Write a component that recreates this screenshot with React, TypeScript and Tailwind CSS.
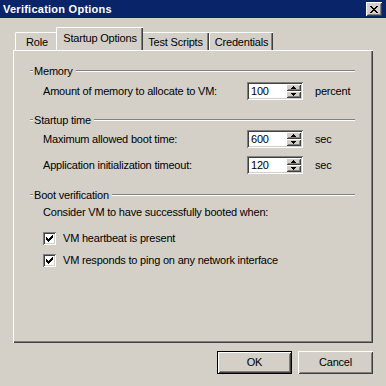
import React from "react";

const raised =
  "shadow-[inset_1px_1px_0_#ffffff,inset_-1px_-1px_0_#404040,inset_2px_2px_0_#d4d0c8,inset_-2px_-2px_0_#808080]";
const sunken =
  "shadow-[inset_1px_1px_0_#808080,inset_-1px_-1px_0_#ffffff,inset_2px_2px_0_#404040,inset_-2px_-2px_0_#d4d0c8]";

function GroupHeader({ label }: { label: string }) {
  return (
    <div className="flex h-[14px] items-center">
      <div className="flex w-[3px] flex-col">
        <div className="h-px bg-[#808080]" />
        <div className="h-px bg-white" />
      </div>
      <span className="px-[1px] leading-none">{label}</span>
      <div className="ml-[2px] flex flex-1 flex-col">
        <div className="h-px bg-[#808080]" />
        <div className="h-px bg-white" />
      </div>
    </div>
  );
}

function Arrow({ up }: { up: boolean }) {
  return (
    <svg width="5" height="3" viewBox="0 0 5 3" className="block">
      {up ? (
        <path d="M2 0h1v1h1v1h1v1H0V2h1V1h1z" fill="#000" />
      ) : (
        <path d="M0 0h5v1H4v1H3v1H2V2H1V1H0z" fill="#000" />
      )}
    </svg>
  );
}

function Spinner({ value }: { value: string }) {
  return (
    <div className={`flex h-[18px] w-[56px] items-stretch bg-white p-[2px] ${sunken}`}>
      <div className="flex flex-1 items-center pl-[2px] leading-none">{value}</div>
      <div className="flex w-[15px] flex-col">
        <div className={`flex flex-1 items-center justify-center bg-[#d4d0c8] ${raised}`}>
          <Arrow up />
        </div>
        <div className={`flex flex-1 items-center justify-center bg-[#d4d0c8] ${raised}`}>
          <Arrow up={false} />
        </div>
      </div>
    </div>
  );
}

function Row({ label, value, unit }: { label: string; value: string; unit: string }) {
  return (
    <div className="flex h-[18px] items-center pl-[13px]">
      <span className="w-[204px] leading-none">{label}</span>
      <Spinner value={value} />
      <span className="ml-[12px] leading-none">{unit}</span>
    </div>
  );
}

function Check({ label }: { label: string }) {
  return (
    <div className="flex h-[14px] items-center pl-[13px]">
      <div className={`flex h-[13px] w-[13px] items-center justify-center bg-white ${sunken}`}>
        <svg width="7" height="7" viewBox="0 0 7 7" className="block">
          <path
            d="M0 2h1v1h1v1h1V3h1V2h1V1h1V0h1v3H6v1H5v1H4v1H3v1H2V6H1V5H0z"
            fill="#000"
          />
        </svg>
      </div>
      <span className="ml-[7px] leading-none">{label}</span>
    </div>
  );
}

function Tab({ label, selected, w }: { label: string; selected?: boolean; w: string }) {
  if (selected) {
    return (
      <div
        className={`relative z-10 mx-[-2px] flex h-[23px] items-start justify-center bg-[#d4d0c8] pt-[5px] ${w} border-l border-t border-white shadow-[inset_-1px_0_0_#404040,inset_-2px_0_0_#808080] rounded-tl-[2px]`}
      >
        <span className="leading-none">{label}</span>
      </div>
    );
  }
  return (
    <div
      className={`flex h-[18px] items-start justify-center pt-[4px] ${w} border-l border-t border-white shadow-[inset_-1px_0_0_#404040,inset_-2px_0_0_#808080] rounded-tl-[2px]`}
    >
      <span className="leading-none">{label}</span>
    </div>
  );
}

export default function App() {
  return (
    <div
      className="flex h-[386px] w-[386px] flex-col bg-[#d4d0c8] text-[11px] tracking-[-0.2px] text-black"
      style={{ fontFamily: '"Liberation Sans", Arial, sans-serif' }}
    >
      <div className="flex h-[18px] items-center justify-between bg-[#0a246a] pl-[3px] pr-[4px]">
        <span className="font-bold leading-none tracking-[0.25px] text-white">Verification Options</span>
        <div className={`flex h-[14px] w-[16px] items-center justify-center bg-[#d4d0c8] ${raised}`}>
          <svg width="8" height="7" viewBox="0 0 8 7" className="block">
            <path
              d="M0 0h2v1h1v1h2V1h1V0h2v1H7v1H6v1H5v1h1v1h1v1h1v1H6V6H5V5H3v1H2v1H0V6h1V5h1V4h1V3H2V2H1V1H0z"
              fill="#000"
            />
          </svg>
        </div>
      </div>

      <div className="flex flex-1 flex-col px-[13px] pt-[9px]">
        <div className="flex h-[23px] items-end pl-[2px]">
          <Tab label="Role" w="w-[43px]" />
          <Tab label="Startup Options" selected w="w-[87px]" />
          <Tab label="Test Scripts" w="w-[68px]" />
          <Tab label="Credentials" w="w-[64px]" />
        </div>

        <div className="flex h-[293px] flex-col border-l border-t border-white pl-[16px] pr-[18px] pt-[13px] shadow-[inset_-1px_-1px_0_#404040,inset_-2px_-2px_0_#808080]">
          <GroupHeader label="Memory" />
          <div className="mt-[4px]">
            <Row label="Amount of memory to allocate to VM:" value="100" unit="percent" />
          </div>
          <div className="mt-[13px]">
            <GroupHeader label="Startup time" />
          </div>
          <div className="mt-[3px]">
            <Row label="Maximum allowed boot time:" value="600" unit="sec" />
          </div>
          <div className="mt-[8px]">
            <Row label="Application initialization timeout:" value="120" unit="sec" />
          </div>
          <div className="mt-[14px]">
            <GroupHeader label="Boot verification" />
          </div>
          <div className="mt-[3px] flex h-[14px] items-center pl-[13px] leading-none">
            Consider VM to have successfully booted when:
          </div>
          <div className="mt-[12px]">
            <Check label="VM heartbeat is present" />
          </div>
          <div className="mt-[8px]">
            <Check label="VM responds to ping on any network interface" />
          </div>
        </div>

        <div className="mt-[8px] flex justify-end gap-[6px]">
          <div className="h-[23px] w-[75px] border border-black">
            <div className={`flex h-full w-full items-center justify-center leading-none ${raised}`}>
              OK
            </div>
          </div>
          <div className={`flex h-[23px] w-[75px] items-center justify-center leading-none ${raised}`}>
            Cancel
          </div>
        </div>
      </div>
    </div>
  );
}
